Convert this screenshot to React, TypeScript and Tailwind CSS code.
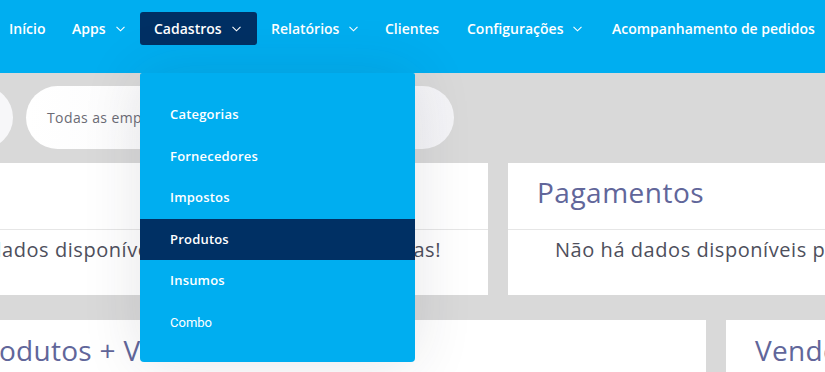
import React from "react";

const Chevron = () => (
  <svg width="9" height="6" viewBox="0 0 9 6" className="ml-[10px] shrink-0">
    <polyline points="0.5,0.8 4.5,4.8 8.5,0.8" fill="none" stroke="#ffffff" strokeWidth="1.1" />
  </svg>
);

type NavItem = { label: string; w: number; chev?: boolean; active?: boolean; pl: number };

const navItems: NavItem[] = [
  { label: "Início", w: 58, pl: 9 },
  { label: "Apps", w: 82, chev: true, pl: 14 },
  { label: "Cadastros", w: 117, chev: true, active: true, pl: 14 },
  { label: "Relatórios", w: 114, chev: true, pl: 14 },
  { label: "Clientes", w: 82, pl: 14 },
  { label: "Configurações", w: 145, chev: true, pl: 14 },
  { label: "Acompanhamento de pedidos", w: 240, pl: 14 },
];

const menu = ["Categorias", "Fornecedores", "Impostos", "Produtos", "Insumos", "Combo"];

export default function App() {
  return (
    <div className="relative w-[825px] h-[372px] overflow-hidden bg-[#d9d9d9] font-['Open_Sans',sans-serif]">
      <nav className="h-[73px] bg-[#00aef0] flex items-start pt-[12px]">
        {navItems.map((it) => (
          <div
            key={it.label}
            style={{ width: it.w, paddingLeft: it.pl }}
            className={`shrink-0 h-[33px] flex items-center text-[14px] font-semibold text-white whitespace-nowrap ${
              it.active ? "bg-[#003064] rounded-[3px]" : ""
            }`}
          >
            <span>{it.label}</span>
            {it.chev && <Chevron />}
          </div>
        ))}
      </nav>

      <div className="ml-[-142px] w-[1400px]">
        <div className="flex mt-[13px] gap-[13px] pl-[15px]">
          <div className="w-[140px] h-[63px] rounded-full bg-[#f7f7f9]" />
          <div className="w-[428px] h-[63px] rounded-full bg-gradient-to-r from-white to-[#f4f4f7] flex items-center pl-[21px] pr-[40px] justify-between">
            <span className="text-[14px] tracking-[0.4px] text-[#6b6b75]">Todas as empresas</span>
            <svg width="8" height="5" viewBox="0 0 8 5">
              <polyline points="0.5,0.5 4,4 7.5,0.5" fill="none" stroke="#555" strokeWidth="1.2" />
            </svg>
          </div>
        </div>

        <div className="flex mt-[14px] gap-[20px]">
          <div className="w-[630px] h-[132px] bg-white flex flex-col">
            <div className="h-[67px] border-b border-[#e6e6e6] flex items-center px-[29px] pb-[8px]">
              <span className="text-[28px] tracking-[0.5px] text-[#61669a]">Vendas</span>
            </div>
            <div className="flex-1 flex items-start justify-end pt-[5px] pr-[47px]">
              <span className="text-[20px] tracking-[0.55px] text-[#4e4f5c] whitespace-nowrap">Não há dados disponíveis para as datas selecionadas!</span>
            </div>
          </div>
          <div className="w-[630px] h-[132px] bg-white flex flex-col">
            <div className="h-[67px] border-b border-[#e6e6e6] flex items-center px-[29px] pb-[8px]">
              <span className="text-[28px] tracking-[0.5px] text-[#61669a]">Pagamentos</span>
            </div>
            <div className="flex-1 flex items-start pt-[5px] px-[47px]">
              <span className="text-[20px] tracking-[0.55px] text-[#4e4f5c] whitespace-nowrap">Não há dados disponíveis para as datas selecionadas!</span>
            </div>
          </div>
        </div>

        <div className="flex mt-[25px] gap-[20px]">
          <div className="w-[848px] h-[132px] bg-white flex flex-col">
            <div className="h-[60px] flex items-center pl-[112px]">
              <span className="text-[28px] tracking-[0.3px] text-[#61669a] whitespace-nowrap">Produtos + Vendidos</span>
            </div>
          </div>
          <div className="w-[500px] h-[132px] bg-white flex flex-col">
            <div className="h-[60px] flex items-center px-[29px]">
              <span className="text-[28px] tracking-[0.3px] text-[#61669a] whitespace-nowrap">Vendedores</span>
            </div>
          </div>
        </div>
      </div>

      <div className="absolute left-[140px] top-[73px] w-[275px] h-[289px] bg-[#00aef0] rounded-b-[4px] rounded-t-[2px] pt-[21px] shadow-[0_0_60px_rgba(40,40,60,0.12)]">
        {menu.map((m) => (
          <div
            key={m}
            className={`h-[41.5px] flex items-center pl-[30px] text-white ${
              m === "Produtos" ? "bg-[#003064]" : ""
            } ${m === "Combo" ? "font-['Roboto',sans-serif] text-[13px]" : "text-[13px] font-semibold tracking-[0.2px]"}`}
          >
            {m}
          </div>
        ))}
      </div>
    </div>
  );
}
